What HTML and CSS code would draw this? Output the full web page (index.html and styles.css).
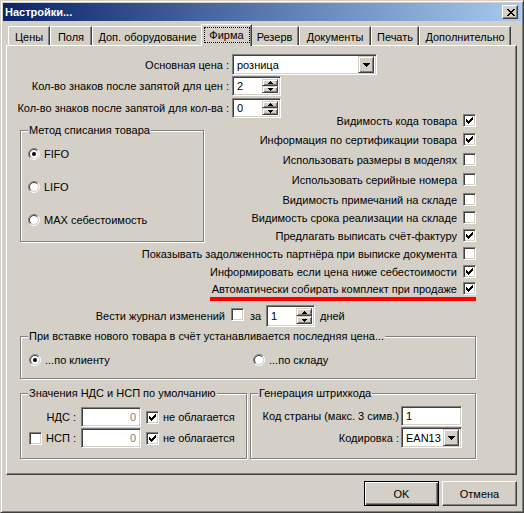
FILE: index.html
```html
<!DOCTYPE html>
<html lang="ru">
<head>
<meta charset="utf-8">
<title>Настройки...</title>
<link rel="stylesheet" href="styles.css">
</head>
<body>
<div class="window">
  <div class="titlebar">
    <span class="title">Настройки...</span>
    <span class="close-btn">
      <svg width="8" height="7" viewBox="0 0 8 7" shape-rendering="crispEdges"><path d="M0 0h2v1H0zM6 0h2v1H6zM1 1h2v1H1zM5 1h2v1H5zM2 2h4v1H2zM3 3h2v1H3zM2 4h4v1H2zM1 5h2v1H1zM5 5h2v1H5zM0 6h2v1H0zM6 6h2v1H6z" fill="#000"/></svg>
    </span>
  </div>

  <div class="tabs">
    <div class="tab">Цены</div>
    <div class="tab">Поля</div>
    <div class="tab">Доп. оборудование</div>
    <div class="tab tab-active"><span class="focus">Фирма</span></div>
    <div class="tab">Резерв</div>
    <div class="tab">Документы</div>
    <div class="tab">Печать</div>
    <div class="tab">Дополнительно</div>
  </div>

  <div class="panel">
    <div class="form-row row-price">
      <span class="form-label">Основная цена :</span>
      <div class="field combo combo-price">
        <span class="field-text">розница</span>
        <span class="drop-btn"><svg width="7" height="4" viewBox="0 0 7 4" shape-rendering="crispEdges"><path d="M0 0h7v1H0zM1 1h5v1H1zM2 2h3v1H2zM3 3h1v1H3z" fill="#000"/></svg></span>
      </div>
    </div>
    <div class="form-row row-dec">
      <span class="form-label">Кол-во знаков после запятой для цен :</span>
      <div class="field spin">
        <span class="field-text">2</span>
        <span class="spin-btns">
          <span class="spin-btn"><svg width="5" height="3" viewBox="0 0 5 3" shape-rendering="crispEdges"><path d="M2 0h1v1H2zM1 1h3v1H1zM0 2h5v1H0z" fill="#000"/></svg></span>
          <span class="spin-btn"><svg width="5" height="3" viewBox="0 0 5 3" shape-rendering="crispEdges"><path d="M0 0h5v1H0zM1 1h3v1H1zM2 2h1v1H2z" fill="#000"/></svg></span>
        </span>
      </div>
    </div>
    <div class="form-row row-qty">
      <span class="form-label">Кол-во знаков после запятой для кол-ва :</span>
      <div class="field spin">
        <span class="field-text">0</span>
        <span class="spin-btns">
          <span class="spin-btn"><svg width="5" height="3" viewBox="0 0 5 3" shape-rendering="crispEdges"><path d="M2 0h1v1H2zM1 1h3v1H1zM0 2h5v1H0z" fill="#000"/></svg></span>
          <span class="spin-btn"><svg width="5" height="3" viewBox="0 0 5 3" shape-rendering="crispEdges"><path d="M0 0h5v1H0zM1 1h3v1H1zM2 2h1v1H2z" fill="#000"/></svg></span>
        </span>
      </div>
    </div>

    <div class="mid">
      <div class="group group-method">
        <span class="legend">Метод списания товара</span>
        <div class="radio-list">
          <div class="radio-row">
            <svg class="radio" width="12" height="12" viewBox="0 0 12 12"><circle cx="6" cy="6" r="4.5" fill="#fff"/><path d="M2.1 9.9A5.5 5.5 0 0 1 9.9 2.1" fill="none" stroke="#808080"/><path d="M9.9 2.1A5.5 5.5 0 0 1 2.1 9.9" fill="none" stroke="#fff"/><path d="M2.8 9.2A4.5 4.5 0 0 1 9.2 2.8" fill="none" stroke="#404040"/><path d="M9.2 2.8A4.5 4.5 0 0 1 2.8 9.2" fill="none" stroke="#D4D0C8"/><circle cx="6" cy="6" r="2" fill="#000"/></svg>
            <span>FIFO</span>
          </div>
          <div class="radio-row">
            <svg class="radio" width="12" height="12" viewBox="0 0 12 12"><circle cx="6" cy="6" r="4.5" fill="#fff"/><path d="M2.1 9.9A5.5 5.5 0 0 1 9.9 2.1" fill="none" stroke="#808080"/><path d="M9.9 2.1A5.5 5.5 0 0 1 2.1 9.9" fill="none" stroke="#fff"/><path d="M2.8 9.2A4.5 4.5 0 0 1 9.2 2.8" fill="none" stroke="#404040"/><path d="M9.2 2.8A4.5 4.5 0 0 1 2.8 9.2" fill="none" stroke="#D4D0C8"/></svg>
            <span>LIFO</span>
          </div>
          <div class="radio-row">
            <svg class="radio" width="12" height="12" viewBox="0 0 12 12"><circle cx="6" cy="6" r="4.5" fill="#fff"/><path d="M2.1 9.9A5.5 5.5 0 0 1 9.9 2.1" fill="none" stroke="#808080"/><path d="M9.9 2.1A5.5 5.5 0 0 1 2.1 9.9" fill="none" stroke="#fff"/><path d="M2.8 9.2A4.5 4.5 0 0 1 9.2 2.8" fill="none" stroke="#404040"/><path d="M9.2 2.8A4.5 4.5 0 0 1 2.8 9.2" fill="none" stroke="#D4D0C8"/></svg>
            <span>MAX себестоимость</span>
          </div>
        </div>
      </div>

      <div class="checks">
        <div class="check-row"><span class="check-label">Видимость кода товара</span><span class="cb"><svg width="13" height="13" viewBox="0 0 13 13" shape-rendering="crispEdges"><path d="M3 5h1v3H3zM4 6h1v3H4zM5 7h1v3H5zM6 6h1v3H6zM7 5h1v3H7zM8 4h1v3H8zM9 3h1v3H9z" fill="#000"/></svg></span></div>
        <div class="check-row"><span class="check-label">Информация по сертификации товара</span><span class="cb"><svg width="13" height="13" viewBox="0 0 13 13" shape-rendering="crispEdges"><path d="M3 5h1v3H3zM4 6h1v3H4zM5 7h1v3H5zM6 6h1v3H6zM7 5h1v3H7zM8 4h1v3H8zM9 3h1v3H9z" fill="#000"/></svg></span></div>
        <div class="check-row"><span class="check-label">Использовать размеры в моделях</span><span class="cb"></span></div>
        <div class="check-row"><span class="check-label">Использовать серийные номера</span><span class="cb"></span></div>
        <div class="check-row"><span class="check-label">Видимость примечаний на складе</span><span class="cb"></span></div>
        <div class="check-row"><span class="check-label">Видимость срока реализации на складе</span><span class="cb"></span></div>
        <div class="check-row"><span class="check-label">Предлагать выписать счёт-фактуру</span><span class="cb"><svg width="13" height="13" viewBox="0 0 13 13" shape-rendering="crispEdges"><path d="M3 5h1v3H3zM4 6h1v3H4zM5 7h1v3H5zM6 6h1v3H6zM7 5h1v3H7zM8 4h1v3H8zM9 3h1v3H9z" fill="#000"/></svg></span></div>
        <div class="check-row"><span class="check-label">Показывать задолженность партнёра при выписке документа</span><span class="cb"></span></div>
        <div class="check-row"><span class="check-label">Информировать если цена ниже себестоимости</span><span class="cb"><svg width="13" height="13" viewBox="0 0 13 13" shape-rendering="crispEdges"><path d="M3 5h1v3H3zM4 6h1v3H4zM5 7h1v3H5zM6 6h1v3H6zM7 5h1v3H7zM8 4h1v3H8zM9 3h1v3H9z" fill="#000"/></svg></span></div>
        <div class="check-row"><span class="check-label">Автоматически собирать комплект при продаже</span><span class="cb"><svg width="13" height="13" viewBox="0 0 13 13" shape-rendering="crispEdges"><path d="M3 5h1v3H3zM4 6h1v3H4zM5 7h1v3H5zM6 6h1v3H6zM7 5h1v3H7zM8 4h1v3H8zM9 3h1v3H9z" fill="#000"/></svg></span></div>
      </div>
    </div>

    <div class="redline"></div>

    <div class="journal">
      <span class="journal-label">Вести журнал изменений</span>
      <span class="cb cb-journal"></span>
      <span class="journal-za">за</span>
      <div class="field spin spin-tall">
        <span class="field-text">1</span>
        <span class="spin-btns">
          <span class="spin-btn"><svg width="5" height="3" viewBox="0 0 5 3" shape-rendering="crispEdges"><path d="M2 0h1v1H2zM1 1h3v1H1zM0 2h5v1H0z" fill="#000"/></svg></span>
          <span class="spin-btn"><svg width="5" height="3" viewBox="0 0 5 3" shape-rendering="crispEdges"><path d="M0 0h5v1H0zM1 1h3v1H1zM2 2h1v1H2z" fill="#000"/></svg></span>
        </span>
      </div>
      <span class="journal-days">дней</span>
    </div>

    <div class="group group-price">
      <span class="legend">При вставке нового товара в счёт устанавливается последняя цена...</span>
      <div class="price-radios">
        <div class="radio-row radio-client">
          <svg class="radio" width="12" height="12" viewBox="0 0 12 12"><circle cx="6" cy="6" r="4.5" fill="#fff"/><path d="M2.1 9.9A5.5 5.5 0 0 1 9.9 2.1" fill="none" stroke="#808080"/><path d="M9.9 2.1A5.5 5.5 0 0 1 2.1 9.9" fill="none" stroke="#fff"/><path d="M2.8 9.2A4.5 4.5 0 0 1 9.2 2.8" fill="none" stroke="#404040"/><path d="M9.2 2.8A4.5 4.5 0 0 1 2.8 9.2" fill="none" stroke="#D4D0C8"/><circle cx="6" cy="6" r="2" fill="#000"/></svg>
          <span>...по клиенту</span>
        </div>
        <div class="radio-row">
          <svg class="radio" width="12" height="12" viewBox="0 0 12 12"><circle cx="6" cy="6" r="4.5" fill="#fff"/><path d="M2.1 9.9A5.5 5.5 0 0 1 9.9 2.1" fill="none" stroke="#808080"/><path d="M9.9 2.1A5.5 5.5 0 0 1 2.1 9.9" fill="none" stroke="#fff"/><path d="M2.8 9.2A4.5 4.5 0 0 1 9.2 2.8" fill="none" stroke="#404040"/><path d="M9.2 2.8A4.5 4.5 0 0 1 2.8 9.2" fill="none" stroke="#D4D0C8"/></svg>
          <span>...по складу</span>
        </div>
      </div>
    </div>

    <div class="bottom-groups">
      <div class="group group-vat">
        <span class="legend">Значения НДС и НСП по умолчанию</span>
        <div class="vat-row vat-first">
          <span class="vat-label">НДС :</span>
          <div class="field vat-field">0</div>
          <span class="cb cb-vat"><svg width="13" height="13" viewBox="0 0 13 13" shape-rendering="crispEdges"><path d="M3 5h1v3H3zM4 6h1v3H4zM5 7h1v3H5zM6 6h1v3H6zM7 5h1v3H7zM8 4h1v3H8zM9 3h1v3H9z" fill="#000"/></svg></span>
          <span class="vat-note">не облагается</span>
        </div>
        <div class="vat-row vat-second">
          <span class="vat-label"><span class="cb cb-nsp"></span>НСП :</span>
          <div class="field vat-field">0</div>
          <span class="cb cb-vat"><svg width="13" height="13" viewBox="0 0 13 13" shape-rendering="crispEdges"><path d="M3 5h1v3H3zM4 6h1v3H4zM5 7h1v3H5zM6 6h1v3H6zM7 5h1v3H7zM8 4h1v3H8zM9 3h1v3H9z" fill="#000"/></svg></span>
          <span class="vat-note">не облагается</span>
        </div>
      </div>

      <div class="group group-barcode">
        <span class="legend">Генерация штрихкода</span>
        <div class="bc-row bc-first">
          <span class="bc-label">Код страны (макс. 3 симв.)</span>
          <div class="field bc-field"><span class="field-text">1</span></div>
        </div>
        <div class="bc-row bc-second">
          <span class="bc-label">Кодировка :</span>
          <div class="field combo bc-combo">
            <span class="field-text">EAN13</span>
            <span class="drop-btn"><svg width="7" height="4" viewBox="0 0 7 4" shape-rendering="crispEdges"><path d="M0 0h7v1H0zM1 1h5v1H1zM2 2h3v1H2zM3 3h1v1H3z" fill="#000"/></svg></span>
          </div>
        </div>
      </div>
    </div>
  </div>

  <div class="buttons">
    <div class="btn btn-default">OK</div>
    <div class="btn">Отмена</div>
  </div>
</div>
</body>
</html>
```

FILE: styles.css
```css
* { box-sizing: border-box; }

html, body {
  margin: 0;
  background: #D4D0C8;
}

body {
  font-family: "Liberation Sans", Arial, sans-serif;
  font-size: 11px;
  color: #000;
}

.window {
  width: 524px;
  height: 513px;
  background: #D4D0C8;
  border: 1px solid;
  border-color: #D4D0C8 #404040 #404040 #D4D0C8;
  box-shadow: inset 1px 1px #fff, inset -1px -1px #808080;
  padding: 2px;
}

/* title bar */
.titlebar {
  height: 18px;
  display: flex;
  align-items: center;
  justify-content: space-between;
  background: linear-gradient(to right, #0A246A, #A6CAF0);
  padding: 0 3px 0 2px;
}
.title {
  color: #fff;
  font-weight: bold;
  font-size: 11px;
  white-space: nowrap;
}
.close-btn {
  width: 16px;
  height: 14px;
  background: #D4D0C8;
  border: 1px solid;
  border-color: #fff #404040 #404040 #fff;
  box-shadow: inset -1px -1px #808080;
  display: flex;
  align-items: center;
  justify-content: center;
  padding: 1px 0 0 2px;
}
.close-btn svg { display: block; }

/* tabs */
.tabs {
  display: grid;
  grid-template-columns: 42px 42px 111px 47px 49px 72px 48px 92px;
  align-items: end;
  height: 24px;
  margin-left: 3px;
  padding-left: 2px;
}
.tab {
  height: 19px;
  border-top: 1px solid #fff;
  border-left: 1px solid #fff;
  border-right: 1px solid #404040;
  box-shadow: inset -1px 0 #808080;
  display: flex;
  align-items: center;
  justify-content: center;
  white-space: nowrap;
  padding-top: 1px;
}
.tab-active {
  height: 22px;
  margin: 0 -2px -1px;
  position: relative;
  z-index: 1;
  background: #D4D0C8;
  align-items: flex-start;
  padding-top: 0;
}
.focus {
  display: flex;
  align-items: center;
  justify-content: center;
  width: 46px;
  height: 16px;
  margin-top: 2px;
  border: 1px dotted #000;
}

/* panel */
.panel {
  width: 511px;
  height: 430px;
  margin-left: 3px;
  border: 1px solid;
  border-color: #fff #404040 #404040 #fff;
  box-shadow: inset -1px -1px #808080;
}

/* sunken field */
.field {
  background: #fff;
  border: 1px solid;
  border-color: #808080 #fff #fff #808080;
  box-shadow: inset 1px 1px #404040, inset -1px -1px #D4D0C8;
  display: flex;
  align-items: center;
  padding: 2px;
  white-space: nowrap;
}
.field-text { padding-left: 2px; }

.drop-btn {
  margin-left: auto;
  width: 16px;
  height: 17px;
  flex: none;
  background: #D4D0C8;
  border: 1px solid;
  border-color: #D4D0C8 #404040 #404040 #D4D0C8;
  box-shadow: inset 1px 1px #fff, inset -1px -1px #808080;
  display: flex;
  align-items: center;
  justify-content: center;
  padding-top: 1px;
}
.drop-btn svg, .spin-btn svg { display: block; }

.spin {
  width: 49px;
  height: 20px;
}
.spin-tall { height: 22px; }
.spin-btns {
  margin-left: auto;
  width: 16px;
  height: 100%;
  display: flex;
  flex-direction: column;
  flex: none;
}
.spin-btn {
  flex: 1;
  background: #D4D0C8;
  border: 1px solid;
  border-color: #D4D0C8 #404040 #404040 #D4D0C8;
  box-shadow: inset 1px 1px #fff, inset -1px -1px #808080;
  display: flex;
  align-items: center;
  justify-content: center;
}

/* top form rows */
.form-row {
  display: flex;
  align-items: center;
}
.row-price { margin-top: 8px; height: 21px; }
.row-dec { margin-top: 1px; height: 20px; }
.row-qty { margin-top: 2px; height: 20px; }
.form-label {
  width: 225px;
  flex: none;
  display: flex;
  justify-content: flex-end;
  padding-right: 3px;
  white-space: nowrap;
}
.combo-price { width: 145px; height: 21px; }

/* group boxes */
.group {
  border: 1px solid #808080;
  box-shadow: inset 1px 1px #fff, 1px 1px #fff;
  flex: none;
}
.legend {
  display: block;
  width: fit-content;
  height: 13px;
  line-height: 13px;
  margin: -7px 0 0 7px;
  padding: 0 1px;
  background: #D4D0C8;
  white-space: nowrap;
}

.mid {
  display: flex;
  margin-top: -4px;
}
.group-method {
  margin: 16px 0 0 13px;
  width: 184px;
  height: 112px;
}
.radio-list {
  display: flex;
  flex-direction: column;
  gap: 21px;
  margin-top: 11px;
  padding-left: 7px;
}
.radio-row {
  display: flex;
  align-items: center;
  gap: 4px;
  height: 12px;
  white-space: nowrap;
}
.radio { display: block; flex: none; }

.checks {
  flex: 1;
  min-width: 0;
  margin-right: 40px;
  display: grid;
  grid-template-columns: minmax(0, 1fr);
  grid-template-rows: 19px 20px 20px 20px 18px 18px 18px 18px 17px 13px;
}
.check-row {
  min-width: 0;
  height: 13px;
  display: flex;
  justify-content: flex-end;
  align-items: center;
  white-space: nowrap;
}
.check-label { margin-right: 6px; }

.cb {
  width: 13px;
  height: 13px;
  flex: none;
  display: block;
  background: #fff;
  border: 1px solid;
  border-color: #808080 #fff #fff #808080;
  box-shadow: inset 1px 1px #404040, inset -1px -1px #D4D0C8;
  position: relative;
}
.cb svg {
  display: block;
  margin: -1px 0 0 -1px;
}

.redline {
  margin: 2px 0 0 203px;
  width: 266px;
  height: 4px;
  background: #f00;
}

/* journal row */
.journal {
  display: flex;
  align-items: center;
  height: 22px;
  margin-top: 4px;
  white-space: nowrap;
}
.journal-label {
  width: 224px;
  flex: none;
  display: flex;
  justify-content: flex-end;
  padding-right: 6px;
}
.cb-journal {
  align-self: flex-start;
  margin-top: 3px;
}
.journal-za {
  width: 22px;
  flex: none;
  padding-left: 6px;
}
.journal-days { margin-left: 5px; }

/* price group */
.group-price {
  margin: 9px 0 0 13px;
  width: 456px;
  height: 43px;
}
.price-radios {
  display: flex;
  margin-top: 11px;
  padding-left: 8px;
}
.radio-client { width: 224px; flex: none; }

/* bottom groups */
.bottom-groups {
  display: flex;
  margin-top: 14px;
}
.group-vat {
  margin-left: 13px;
  width: 227px;
  height: 66px;
}
.group-barcode {
  margin-left: 3px;
  width: 226px;
  height: 66px;
}
.vat-row {
  display: flex;
  align-items: center;
  height: 20px;
  white-space: nowrap;
}
.vat-first { margin-top: 7px; }
.vat-second { margin-top: 1px; }
.vat-label {
  width: 60px;
  flex: none;
  display: flex;
  align-items: center;
  justify-content: flex-end;
  padding-right: 5px;
}
.cb-nsp { margin: 0 auto 0 8px; }
.vat-field {
  width: 60px;
  height: 20px;
  justify-content: flex-end;
  padding: 0 4px 0 2px;
  color: #808080;
}
.cb-vat { margin-left: 5px; }
.vat-note { margin-left: 4px; }

.bc-row {
  display: flex;
  align-items: center;
  white-space: nowrap;
}
.bc-first { margin-top: 6px; height: 20px; }
.bc-second { margin-top: 1px; height: 21px; }
.bc-label {
  width: 150px;
  flex: none;
  display: flex;
  justify-content: flex-end;
  padding-right: 2px;
}
.bc-field { width: 61px; height: 20px; }
.bc-combo { width: 61px; height: 21px; }

/* buttons */
.buttons {
  display: flex;
  justify-content: flex-end;
  gap: 3px;
  margin-top: 6px;
  padding-right: 4px;
}
.btn {
  width: 75px;
  height: 25px;
  background: #D4D0C8;
  border: 1px solid;
  border-color: #fff #404040 #404040 #fff;
  box-shadow: inset -1px -1px #808080;
  display: flex;
  align-items: center;
  justify-content: center;
}
.btn-default {
  border-color: #000;
  box-shadow: inset 1px 1px #fff, inset -1px -1px #404040, inset -2px -2px #808080;
}
```
